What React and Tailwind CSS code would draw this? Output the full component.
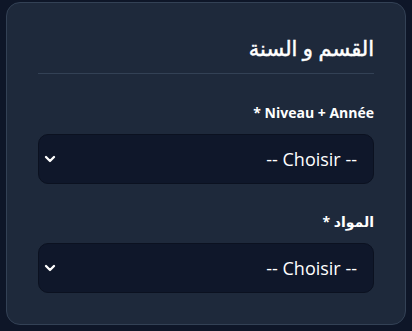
import { ChevronDown } from "lucide-react";

function Field({ label, value }) {
    return (
        <div className="flex flex-col gap-[11px]">
            <label className="text-[14px] font-bold text-white leading-5">{label}</label>
            <div className="h-[50px] rounded-[10px] bg-[#0f172a] border border-[#0b1120] flex items-center justify-between pr-[16px] pl-[3px]">
                <span className="text-[18px] text-white">{value}</span>
                <ChevronDown size={16} strokeWidth={3.5} className="text-white" />
            </div>
        </div>
    );
}

export default function App() {
    return (
        <div className="min-h-screen bg-[#0e1628] pt-[2px] px-[6px] pb-[6px]" style={{ fontFamily: '"Open Sans", "DejaVu Sans", sans-serif' }}>
            <div dir="rtl" className="bg-[#1e293b] border border-[#334155] rounded-[14px] px-[31px] pt-[30px] pb-[31px]">
                <h2 className="text-[21px] font-normal text-white leading-[30px] [-webkit-text-stroke:0.5px_white]">القسم و السنة</h2>
                <div className="border-t border-[#334155] mt-[10px] mb-[29px]" />
                <div className="flex flex-col gap-[28px]">
                    <Field label="Niveau + Année *" value="-- Choisir --" />
                    <Field label="المواد *" value="-- Choisir --" />
                </div>
            </div>
        </div>
    );
}
